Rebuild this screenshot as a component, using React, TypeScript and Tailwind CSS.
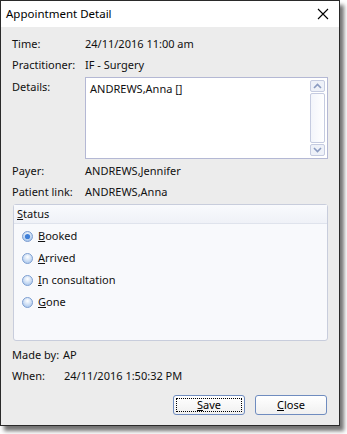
import React from "react";

const font = { fontFamily: '"Noto Sans", "Liberation Sans", sans-serif' };

const Row = ({ label, value }: { label: string; value: string }) => (
  <div className="flex h-[21px] items-center whitespace-nowrap">
    <span className="w-[73px] shrink-0">{label}</span>
    <span>{value}</span>
  </div>
);

const Radio = ({ checked, children }: { checked?: boolean; children: React.ReactNode }) => (
  <div className="flex h-[22px] items-center gap-[5px]">
    <svg width="11" height="11" viewBox="0 0 11 11">
      <defs>
        <radialGradient id={checked ? "rc" : "ru"} cx="50%" cy="35%" r="65%">
          <stop offset="0%" stopColor="#ffffff" />
          <stop offset="100%" stopColor={checked ? "#9fc0ea" : "#a9c6ec"} />
        </radialGradient>
      </defs>
      <circle cx="5.5" cy="5.5" r="5" fill={`url(#${checked ? "rc" : "ru"})`} stroke="#7f9fd0" />
      {checked && <circle cx="5.5" cy="5.5" r="2.6" fill="#3f7fd8" />}
    </svg>
    <span>{children}</span>
  </div>
);

const Scrollbar = () => (
  <div className="flex w-[17px] shrink-0 flex-col gap-[1px] py-[2px] pr-[2px]">
    <div className="flex h-[12px] items-center justify-center rounded-[2px] border border-[#c5cbe0] bg-[#eef1f8]">
      <svg width="9" height="6" viewBox="0 0 9 6">
        <path d="M1 5 L4.5 1.5 L8 5" fill="none" stroke="#8a9ac0" strokeWidth="1.6" />
      </svg>
    </div>
    <div className="flex-1 rounded-[2px] border border-[#c5cbe0] bg-gradient-to-r from-[#f3f5fb] to-[#ffffff]" />
    <div className="flex h-[12px] items-center justify-center rounded-[2px] border border-[#c5cbe0] bg-[#eef1f8]">
      <svg width="9" height="6" viewBox="0 0 9 6">
        <path d="M1 1 L4.5 4.5 L8 1" fill="none" stroke="#8a9ac0" strokeWidth="1.6" />
      </svg>
    </div>
  </div>
);

const Button = ({ children, focused }: { children: React.ReactNode; focused?: boolean }) => (
  <button className="flex h-[20px] w-[72px] items-center justify-center rounded-[3px] border border-[#6f8cbf] bg-gradient-to-b from-[#ffffff] to-[#f0f0f0] p-[2px] text-[11px] text-[#000]">
    <span
      className={`flex h-full w-full items-center justify-center ${
        focused ? "border border-dotted border-[#000]" : ""
      }`}
    >
      {children}
    </span>
  </button>
);

export default function App() {
  return (
    <div className="h-[434px] w-[347px] bg-white" style={font}>
      <div className="flex h-[426px] w-[340px] flex-col border border-[#2a2a2a] bg-[#ececec] text-[11px] text-[#111] shadow-[4px_5px_4px_rgba(0,0,0,0.55)]">
        <div className="flex h-[26px] shrink-0 items-center justify-between bg-white pl-[5px] pr-[10px] text-[11.5px] text-[#000]">
          <span>Appointment Detail</span>
          <svg width="12" height="12" viewBox="0 0 12 12">
            <path d="M1 1 L11 11 M11 1 L1 11" stroke="#000" strokeWidth="1.1" />
          </svg>
        </div>

        <div className="flex flex-1 flex-col px-[11px] pt-[7px]">
          <Row label="Time:" value="24/11/2016 11:00 am" />
          <Row label="Practitioner:" value="IF - Surgery" />
          <div className="flex">
            <span className="mt-[3px] w-[73px] shrink-0">Details:</span>
            <div className="mt-[1px] flex h-[82px] flex-1 border border-[#b4b8d4] bg-white">
              <div className="flex-1 px-[4px] pt-[3px]">
                ANDREWS,Anna <span className="text-[#222]">[]</span>
              </div>
              <Scrollbar />
            </div>
          </div>
          <div className="mt-[2px]">
            <Row label="Payer:" value="ANDREWS,Jennifer" />
            <Row label="Patient link:" value="ANDREWS,Anna" />
          </div>

          <div className="ml-[1px] mt-[1px] flex h-[137px] flex-col rounded-[3px] border border-[#c8cddc] bg-[#f8f9fc]">
            <div className="flex h-[19px] items-center border-b border-[#dfe3ec] bg-gradient-to-b from-[#f9fafd] to-[#eff1f7] pl-[3px]">
              <span>
                <u>S</u>tatus
              </span>
            </div>
            <div className="flex flex-col pl-[8px] pt-[1px]">
              <Radio checked>
                <u>B</u>ooked
              </Radio>
              <Radio>
                <u>A</u>rrived
              </Radio>
              <Radio>
                <u>I</u>n consultation
              </Radio>
              <Radio>
                <u>G</u>one
              </Radio>
            </div>
          </div>

          <div className="mt-[4px] whitespace-nowrap">
            <div className="flex h-[21px] items-center">
              <span className="w-[51px] shrink-0">Made by:</span>
              <span>AP</span>
            </div>
            <div className="flex h-[21px] items-center">
              <span className="w-[52px] shrink-0">When:</span>
              <span>24/11/2016 1:50:32 PM</span>
            </div>
          </div>

          <div className="mt-[8px] flex justify-end gap-[10px] pr-[1px]">
            <Button focused>
              <span>
                <u>S</u>ave
              </span>
            </Button>
            <Button>
              <span>
                <u>C</u>lose
              </span>
            </Button>
          </div>
        </div>
      </div>
    </div>
  );
}
